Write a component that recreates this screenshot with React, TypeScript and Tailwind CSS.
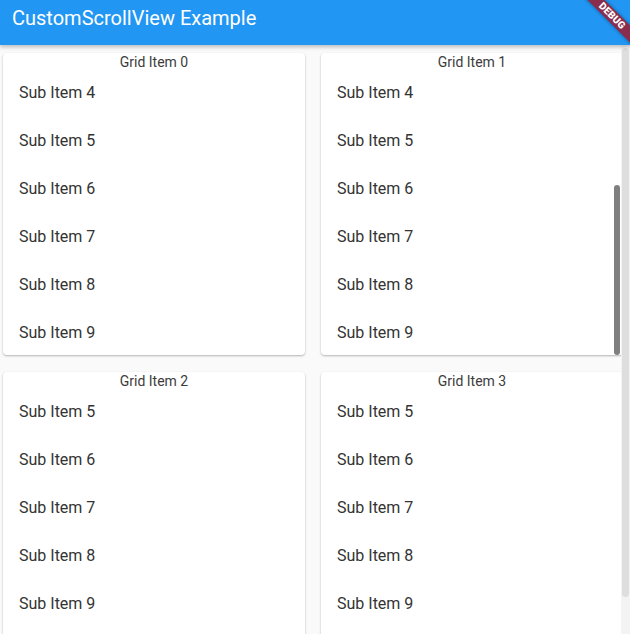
import React from "react";

const font = { fontFamily: "Roboto, 'Noto Sans', Arial, sans-serif" };

function Card({
  title,
  items,
  thumb,
}: {
  title: string;
  items: number[];
  thumb?: boolean;
}) {
  return (
    <div className="relative w-[302px] h-[302px] bg-white rounded-[4px] shadow-[0_1px_2px_rgba(0,0,0,0.22),0_1px_3px_rgba(0,0,0,0.08)] overflow-hidden flex flex-col">
      <div className="h-[16px] text-[14px] leading-[18px] text-center text-[#3c3c3c]">
        {title}
      </div>
      <div className="flex flex-col">
        {items.map((n) => (
          <div
            key={n}
            className="h-[48px] flex items-center pl-4 text-[16px] leading-6 text-[#333333]"
          >
            Sub Item {n}
          </div>
        ))}
      </div>
      {thumb && (
        <div className="absolute left-[293px] top-[132px] w-[6px] h-[170px] rounded-full bg-[#7f7f7f]" />
      )}
    </div>
  );
}

export default function App() {
  return (
    <div
      className="relative w-[630px] h-[634px] overflow-hidden bg-[#fafafa]"
      style={font}
    >
      <div className="relative z-10 h-[45px] bg-[#2196F3] shadow-[0_2px_4px_rgba(0,0,0,0.25)] pl-3 pt-[6px]">
        <div className="text-[20px] leading-6 text-white">
          CustomScrollView Example
        </div>
      </div>
      <div className="grid grid-cols-[302px_302px] gap-x-4 gap-y-[17px] pl-[3px] pt-2">
        <Card title="Grid Item 0" items={[4, 5, 6, 7, 8, 9]} />
        <Card title="Grid Item 1" items={[4, 5, 6, 7, 8, 9]} thumb />
        <Card title="Grid Item 2" items={[5, 6, 7, 8, 9]} />
        <Card title="Grid Item 3" items={[5, 6, 7, 8, 9]} />
      </div>
      {/* outer scrollbar */}
      <div className="absolute left-[621px] top-[45px] w-[9px] h-[589px] bg-[#f3f3f3]" />
      <div className="absolute left-[622px] top-[48px] w-[7px] h-[549px] rounded-full bg-[#dedede]" />
      {/* debug banner */}
      <div className="absolute left-[562px] top-[10px] w-[100px] h-[12px] rotate-45 bg-[#8a2d4d] shadow-[0_0_4px_rgba(0,0,0,0.4)] z-20 flex items-center justify-center">
        <span className="text-[10px] leading-[10px] font-black text-white tracking-[0.2px]">
          DEBUG
        </span>
      </div>
    </div>
  );
}
